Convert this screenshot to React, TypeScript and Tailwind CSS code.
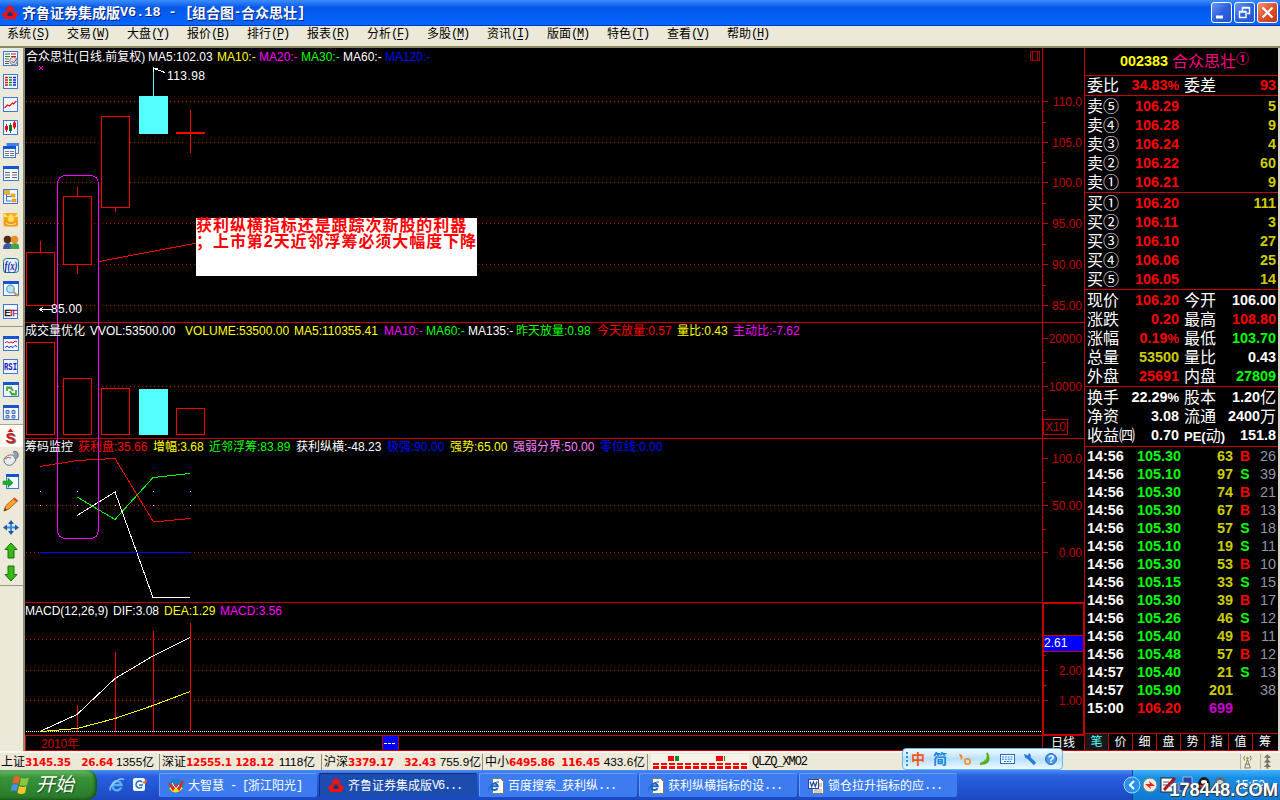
import React from 'react';

const CJK = "font-['Liberation_Sans','Noto_Sans_CJK_SC',sans-serif]";
const MONO = "font-['Liberation_Mono','Noto_Sans_CJK_SC',monospace]";

/* ---------- title bar and menu ---------- */

function AppLogo({ className = '' }: { className?: string }) {
  return (
    <svg viewBox="0 0 16 15" className={className}>
      <path d="M8 0L13 4H11.5V6H4.5V4H3Z" fill="#f81004" />
      <path d="M3 6.5H13L16 9.5V11H0V9.5Z" fill="#f81004" />
      <path d="M2 11H14V14H2Z" fill="#f81004" />
      <path d="M5.500 8.500L8 6.500l2.500 2v2.500h-5z" fill="#18357c" />
    </svg>
  );
}

function TitleBar() {
  return (
    <div className="flex h-[26px] shrink-0 items-center bg-linear-to-b from-[#3b8cff] via-[#0458ea] via-30% to-[#0566ff] border-b border-[#0038b8] pl-[2px] pr-[2px] text-white">
      <AppLogo className="mr-[4px] h-[15px] w-[16px]" />
      <div className="flex items-center text-[14px] leading-[20px] font-bold whitespace-pre [text-shadow:1px_1px_0_#0a1e78]">
        <span className={`w-[98px] ${CJK}`}>齐鲁证券集成版</span>
        <span className={`w-[65px] text-[13.5px] ${MONO}`}>V6.18 - </span>
        <span className={`w-[7px] text-[14px] ${MONO}`}>[</span>
        <span className={CJK}>组合图</span>
        <span className={`w-[7px] text-[12px] ${MONO}`}>-</span>
        <span className={CJK}>合众思壮</span>
        <span className={MONO}>]</span>
      </div>
      <div className="ml-auto flex gap-[2px]">
        {[0, 1, 2].map((i) => (
          <div
            key={i}
            className={`flex h-[21px] w-[21px] items-center justify-center rounded-[3px] border border-white ${
              i === 2
                ? 'bg-linear-to-br from-[#f09070] via-[#e0502c] to-[#c03810]'
                : 'bg-linear-to-br from-[#6c98f4] via-[#2c62e0] to-[#2454d0]'
            }`}
          >
            <svg viewBox="0 0 19 19" className="h-[19px] w-[19px]" fill="none" stroke="#fff">
              {i === 0 && <path d="M4 14h7" strokeWidth="3" />}
              {i === 1 && (
                <g>
                  <path d="M7.500 8V4.500h7v6H12M7 5h8" strokeWidth="1.400" />
                  <path d="M4.500 8.500h6.500v6h-6.500zM4 9h7.500" strokeWidth="1.400" />
                </g>
              )}
              {i === 2 && <path d="M4.500 4.500l10 10M14.500 4.500l-10 10" strokeWidth="2.200" />}
            </svg>
          </div>
        ))}
      </div>
    </div>
  );
}

const MENU: [string, string][] = [
  ['系统', 'S'], ['交易', 'W'], ['大盘', 'Y'], ['报价', 'B'], ['排行', 'P'], ['报表', 'R'], ['分析', 'F'],
  ['多股', 'M'], ['资讯', 'I'], ['版面', 'M'], ['特色', 'T'], ['查看', 'V'], ['帮助', 'H'],
];

function MenuBar() {
  return (
    <div className="flex h-[22px] shrink-0 border-b-2 border-[#8a8a5c] bg-[#ece9d8] pl-[7px] text-[12px] leading-[16px] text-black">
      {MENU.map(([t, k]) => (
        <div key={t} className="flex w-[60px]">
          <span className={CJK}>{t}</span>
          <span className={`tracking-[-1.2px] ${MONO}`}>
            (<span className="underline underline-offset-2">{k}</span>)
          </span>
        </div>
      ))}
    </div>
  );
}

/* ---------- left toolbar ---------- */

const Win = ({ children }: { children?: React.ReactNode }) => (
  <g>
    <rect x="0.5" y="0.5" width="15" height="14" fill="#f4f8ff" stroke="#3c78d8" />
    <rect x="0" y="0" width="16" height="3" fill="#1454d0" />
    {children}
  </g>
);
const Box = ({ children }: { children?: React.ReactNode }) => (
  <g>
    <rect x="0.5" y="0.5" width="14" height="14" fill="#f4f8ff" stroke="#3c78d8" />
    {children}
  </g>
);

const ICONS: React.ReactNode[] = [
  <Box>
    <path d="M2 3h5M2 5.500h5" stroke="#089030" strokeWidth="1.2" />
    <path d="M8 3h5M8 5.500h5" stroke="#e01010" strokeWidth="1.2" />
    <path d="M2 8h4M2 10.500h4M2 12.500h4" stroke="#555" />
    <circle cx="10.500" cy="10" r="3.8" fill="#ddd" stroke="#888" />
    <path d="M8.500 10l2 2 3-4" stroke="#666" fill="none" />
  </Box>,
  <Box>
    <path d="M2 3.500h3M2 6h3M2 8.500h3M2 11h3" stroke="#e01010" strokeWidth="1.4" />
    <path d="M6 3.500h3M6 6h3M6 8.500h3M6 11h3" stroke="#089030" strokeWidth="1.4" />
    <path d="M10 3.500h3M10 6h3M10 8.500h3M10 11h3" stroke="#1020d0" strokeWidth="1.4" />
  </Box>,
  <Box><path d="M1.500 11l3-3 2 1 3-3 1 1 3-3" stroke="#e01010" fill="none" strokeWidth="1.2" /></Box>,
  <Box>
    <path d="M3.500 4v8M11.500 1v8" stroke="#e01010" /><path d="M7.500 3v10" stroke="#087830" />
    <path d="M2 6h3v4H2zM10 2.500h3v5h-3z" fill="#e01010" /><path d="M6 5h3v6H6z" fill="#087830" />
  </Box>,
  <g>
    <path d="M4 0.500h11.500v10H13" fill="#f4f8ff" stroke="#3c78d8" /><path d="M3.500 0H16v3H3.500z" fill="#3c84ec" />
    <rect x="0.500" y="3.500" width="12" height="11" fill="#f4f8ff" stroke="#3c78d8" /><path d="M0 3h13v3H0z" fill="#1454d0" />
    <path d="M2 8.500h4M7 8.500h4M2 10.500h4M7 10.500h4M2 12.500h4M7 12.500h4" stroke="#777" />
  </g>,
  <Win><path d="M2 6.500h5M9 6.500h5M2 9h5M9 9h5M2 11.500h5M9 11.500h5" stroke="#666" /></Win>,
  <Box>
    <path d="M3.500 4v8h5M3.500 7.500h5" stroke="#3c78d8" fill="none" />
    <path d="M1.500 1.500h5v4h-5zM8 5h4v3H8zM9 10h4v3H9z" fill="#f0b020" stroke="#c88408" strokeWidth=".5" />
  </Box>,
  <g>
    <rect x="0.500" y="1" width="14.500" height="13.500" rx="1" fill="#f8a818" />
    <path d="M1 1l4 4 3-3 3 3 4-4v4H1z" fill="#ffe878" /><circle cx="8" cy="7" r="3" fill="#ffe060" />
    <path d="M2 9q5.500 5 12 0v3q-6 4-12 0z" fill="#f8d868" stroke="#d87808" strokeWidth=".7" />
  </g>,
  <g>
    <circle cx="4.500" cy="4.500" r="3.800" fill="#502c18" /><circle cx="11.500" cy="4.500" r="3.800" fill="#e89028" />
    <path d="M0 14q0-6 5-6t4 6z" fill="#3858a8" /><path d="M7 14q0-6 5-6t4 6z" fill="#48a048" />
  </g>,
  <g>
    <rect x="0.500" y="0.500" width="15" height="14" rx="3" fill="#e8f0ff" stroke="#087878" />
    <text x="8" y="11.500" fontSize="11.500" fontStyle="italic" fontWeight="bold" fill="#1020b0" textAnchor="middle" textLength="13" lengthAdjust="spacingAndGlyphs" fontFamily="Liberation Serif, serif">f(x)</text>
  </g>,
  <Win>
    <circle cx="7.500" cy="8" r="3.800" fill="#b8e4f8" stroke="#6898b8" strokeWidth="1.200" />
    <path d="M10.500 11l4.500 4" stroke="#c89030" strokeWidth="2" />
  </Win>,
  <Box>
    <text y="11.500" fontSize="9.500" fontFamily="Liberation Sans, sans-serif" strokeWidth=".3">
      <tspan x="1.200" fill="#000" stroke="#000">E</tspan><tspan x="5.400" fill="#d01010" stroke="#d01010">T</tspan><tspan x="9.200" fill="#803090" stroke="#803090">F</tspan>
    </text>
  </Box>,
  <Win>
    <path d="M2 7l2-1.500 2 1.500 2-1 2 1 2-2 2 1" stroke="#e01010" fill="none" />
    <path d="M2 11.500l2-1.500 2 1.500 2-1 2 1 2-2 2 1" stroke="#1020d0" fill="none" />
  </Win>,
  <Box><text x="7.500" y="11" fontSize="10" fontWeight="bold" fill="#1020c0" textAnchor="middle" textLength="13" lengthAdjust="spacingAndGlyphs" fontFamily="Liberation Mono, monospace">RSI</text></Box>,
  <Win>
    <path d="M4 9V5.500h5M4 6q5-1 6 3" stroke="#48a838" strokeWidth="1.800" fill="none" />
    <path d="M13 8v4.500H8M13 12q-5 1-6-3" stroke="#48a838" strokeWidth="1.800" fill="none" />
  </Win>,
  <Win><path d="M3 5.500h3v3H3zM9 5.500h3v3H9zM3 10.500h3v2.500H3zM9 10.500h3v2.500H9z" fill="#b8c8e8" stroke="#4870b8" /></Win>,
  <g>
    <text x="8.500" y="14.500" fontSize="15" fontWeight="bold" fill="#707070" textAnchor="middle" fontFamily="Liberation Sans, sans-serif">S</text>
    <text x="7.500" y="14" fontSize="15" fontWeight="bold" fill="#d81414" textAnchor="middle" fontFamily="Liberation Sans, sans-serif">S</text>
    <path d="M7.500 -0.500l3 3.500h-6z" fill="#d81414" />
  </g>,
  <g>
    <path d="M1 8q3-5 9-4l3 5q-4 7-9 5-4-2-3-6z" fill="#e8ecf0" stroke="#707880" />
    <path d="M10 1q4-2 5 2t-3 5" fill="#90a0b0" stroke="#607080" /><path d="M2 8q3-3 6-1" stroke="#e05030" fill="none" />
  </g>,
  <g>
    <rect x="3.500" y="0.500" width="12" height="14" fill="#f4f8ff" stroke="#3c78d8" /><path d="M3 0h13v3H3z" fill="#1454d0" />
    <path d="M0 7h5V4l5 4.800-5 4.700v-3H0z" fill="#18b028" stroke="#087818" strokeWidth=".5" />
  </g>,
  <g>
    <path d="M1 14l1.500-5L11 1l3.500 3L6 12z" fill="#f8a030" stroke="#a05818" strokeWidth=".8" />
    <path d="M10 2l1.500-1.500 3.500 3L13.500 5z" fill="#e04830" /><path d="M1 14l1-3 2 2z" fill="#333" />
  </g>,
  <g>
    <path d="M8 0l3 4H5zM8 15l3-4H5zM0 7.500l4-3v6zM16 7.500l-4-3v6z" fill="#1858b8" />
    <path d="M7 4h2v2.500h3v2H9V11H7V8.500H4v-2h3z" fill="#3888e0" />
  </g>,
  <path d="M8 0l6 6.500h-3V15H5V6.500H2z" fill="#38b818" stroke="#187008" />,
  <path d="M8 15l6-6.500h-3V0H5v8.500H2z" fill="#38b818" stroke="#187008" />,
];

function Toolbar() {
  const cell = (n: React.ReactNode, i: number) => (
    <div key={i} className={`flex h-[23px] shrink-0 items-center pl-[3px] ${i === 16 ? 'bg-[#fbfaf4] border-t border-[#aaa890]' : ''}`}>
      <svg viewBox="0 0 16 15" className="h-[15px] w-[16px] overflow-visible">{n}</svg>
    </div>
  );
  return (
    <div className="flex w-[25px] shrink-0 flex-col border-r-2 border-[#8f8d74] bg-[#ece9d8]">
      <div className="-mt-px flex h-[280px] flex-col border-b border-[#9a9888]">{ICONS.slice(0, 12).map((n, i) => cell(n, i))}</div>
      <div className="flex h-[259px] flex-col border-b border-[#9a9888] pt-[5px]">{ICONS.slice(12).map((n, i) => cell(n, i + 12))}</div>
    </div>
  );
}

/* ---------- charts ---------- */

type Seg = [string, string];
const HEADS: Seg[][] = [
  [
    ['合众思壮(日线.前复权)', 'w-[122px] text-white'],
    ['MA5:102.03', 'w-[69px] text-white'],
    ['MA10:-', 'w-[42px] text-[#ffff00]'],
    ['MA20:-', 'w-[42px] text-[#ff00ff]'],
    ['MA30:-', 'w-[42px] text-[#00ff00]'],
    ['MA60:-', 'w-[42px] text-white'],
    ['MA120:-', 'w-[60px] text-[#0000ff]'],
  ],
  [
    ['成交量优化', 'w-[65px] text-white'],
    ['VVOL:53500.00', 'w-[95px] text-white'],
    ['VOLUME:53500.00', 'w-[109px] text-[#ffff00]'],
    ['MA5:110355.41', 'w-[90px] text-[#ffff00]'],
    ['MA10:-', 'w-[42px] text-[#ff00ff]'],
    ['MA60:-', 'w-[42px] text-[#00ff00]'],
    ['MA135:-', 'w-[48px] text-white'],
    ['昨天放量:0.98', 'w-[81px] text-[#00ff00]'],
    ['今天放量:0.57', 'w-[80px] text-[#ff0000]'],
    ['量比:0.43', 'w-[56px] text-[#ffff00]'],
    ['主动比:-7.62', 'w-[80px] text-[#ff00ff]'],
  ],
  [
    ['筹码监控', 'w-[53px] text-white'],
    ['获利盘:35.66', 'w-[75px] text-[#ff0000]'],
    ['增幅:3.68', 'w-[56px] text-[#ffff00]'],
    ['近邻浮筹:83.89', 'w-[87px] text-[#00ff00]'],
    ['获利纵横:-48.23', 'w-[91px] text-white'],
    ['极强:90.00', 'w-[63px] text-[#0000ff]'],
    ['强势:65.00', 'w-[63px] text-[#ffff00]'],
    ['强弱分界:50.00', 'w-[87px] text-[#ff80ff]'],
    ['零位线:0.00', 'w-[70px] text-[#0000ff]'],
  ],
  [
    ['MACD(12,26,9)', 'w-[88px] text-white'],
    ['DIF:3.08', 'w-[51px] text-white'],
    ['DEA:1.29', 'w-[56px] text-[#ffff00]'],
    ['MACD:3.56', 'w-[70px] text-[#ff00ff]'],
  ],
];

const AXIS: [number, string][] = [
  [101.5, '110.0'], [142.5, '105.0'], [182.5, '100.0'], [223.5, '95.00'], [264.5, '90.00'], [305.5, '85.00'],
  [338.5, '20000'], [386.5, '10000'], [458.5, '100.0'], [505.5, '50.00'], [552.5, '0.00'], [670.5, '2.00'], [700.5, '1.00'],
];
const GRID = [101.5, 142.5, 182.5, 223.5, 264.5, 305.5, 386.5, 505.5, 552.5, 639.5, 670.5, 700.5];
const MINOR = [122.5, 162.5, 203.5, 244.5, 285.5, 362.5, 410.5, 482.5, 529.5, 655.5, 685.5];
const MICRO = [111.5, 132.5, 152.5, 172.5, 193.5, 213.5, 234.5, 254.5, 275.5, 295.5, 350.5, 374.5, 398.5, 470.5, 494.5, 517.5, 541.5];
const DAYS = [40, 77, 115, 153, 190];

function ChartDrawing() {
  return (
    <svg viewBox="25 48 1060 703" className="absolute inset-0 h-[703px] w-[1060px]" fill="none" shapeRendering="crispEdges">
      {GRID.map((y) => <path key={y} d={`M26 ${y}H1042`} stroke="#b80000" strokeDasharray="1 3" />)}
      <path d="M26 731.500H1042" stroke="#fff" strokeDasharray="1 1" />

      <g stroke="#c80000">
        <path d="M25 322.500H1085M25 438.500H1085M25 602.500H1085M25 735.500H1085M25 750.500H1085M1042.500 48V751M1084.500 48V751M25.500 735V751" />
        <path d="M1043 603.500H1083.500V734.500H1043.500V603" />
        {AXIS.map(([y]) => <path key={y} d={`M1042 ${y}h6`} />)}
        {MINOR.map((y) => <path key={y} d={`M1042 ${y}h4`} />)}
        {MICRO.map((y) => <path key={y} d={`M1042 ${y}h2`} />)}
        <path d="M1043.500 419.500h24v15h-24z" />
        <path d="M1030.500 51.500h9v9h-9zM1032.500 52v8M1037.500 52v8" stroke="#a00000" />
      </g>
      <rect x="1044" y="636" width="39" height="15" fill="#0000ff" />
      <path d="M1044 635.500h39M1044 651.500h39" stroke="#c80000" />
      <rect x="382.500" y="735.500" width="16" height="15" fill="#0000ff" stroke="#c80000" />
      <path d="M384 743.500h3m1 0h3m1 0h3" stroke="#fff" />

      <g stroke="#ff0000" fill="#000">
        <path d="M40.500 241V252M77.500 187V196M77.500 265V274M115.500 208V212" />
        <rect x="26.500" y="252.500" width="28" height="53" />
        <rect x="63.500" y="196.500" width="28" height="68" />
        <rect x="101.500" y="116.500" width="28" height="91" />
        <path d="M190.500 110V153" />
        <path d="M176 133H205" strokeWidth="2" />
        <rect x="26.500" y="342.500" width="28" height="92" />
        <rect x="63.500" y="378.500" width="28" height="56" />
        <rect x="101.500" y="388.500" width="28" height="46" />
        <rect x="176.500" y="408.500" width="28" height="26" />
      </g>
      <path d="M153.500 67V96" stroke="#54ffff" />
      <rect x="139" y="96" width="29" height="38" fill="#54ffff" />
      <rect x="139" y="389" width="29" height="46" fill="#54ffff" />
      <path d="M153.500 72V68.500L165 72.500M154 68.500h4" stroke="#fff" />
      <path d="M40 309.500H52M43 307l-3 2.500 3 2.500" stroke="#fff" />
      <path d="M39 66l4 4M43 66l-4 4" stroke="#ff00ff" />

      <path d="M40 466.500L77 460.500 115 458.500 153.500 522 190 518.500" stroke="#ff0000" />
      <path d="M77 497L115 519.500 153 477.500 190 473.500" stroke="#00ff00" />
      <path d="M77 515.500L115 492 153 597.500H190" stroke="#fff" />
      <path d="M40 552.500H190" stroke="#0000ff" />
      {DAYS.map((x) => (
        <g key={x}>
          <rect x={x} y="467" width="1" height="1" fill="#0000ff" />
          <rect x={x} y="491" width="1" height="1" fill="#ffff00" />
          <rect x={x} y="505" width="1" height="1" fill="#ffb0ff" />
        </g>
      ))}

      <path d="M77.500 705V732M115.500 652V732M153.500 631V732M190.500 623V732" stroke="#ff0000" />
      <path d="M41 731L77 714.500 115 678.500 153 656 190 637.500" stroke="#fff" />
      <path d="M41 731.500L77 728.500 115 718.500 153 705.500 190 691.500" stroke="#ffff00" />

      <path d="M99 261.500L197 243" stroke="#ff0000" />
      <path d="M57.500 184Q58 175.500 66 175.500H90Q98 175.500 98.500 184V530Q98 538.500 90 538.500H66Q58 538.500 57.500 530Z" stroke="#ff00ff" />

      <g fontFamily="'Liberation Sans', 'Noto Sans CJK SC', sans-serif" fontSize="12" stroke="none">
        {AXIS.map(([y, t]) => <text key={y} x="1082" y={y + 4.5} fill="#c00000" textAnchor="end">{t}</text>)}
        <text x="1045" y="431" fill="#c00000" textLength="21">X10</text>
        <text x="1044" y="647" fill="#fff">2.61</text>
        <text x="167" y="80" fill="#fff" textLength="38">113.98</text>
        <text x="51" y="313" fill="#fff" textLength="31">85.00</text>
        <text x="41" y="748" fill="#c80000" textLength="38">2010年</text>
        <text x="1051" y="747" fill="#fff">日线</text>
      </g>
    </svg>
  );
}

function Charts() {
  const heights = ['h-[275px]', 'h-[116px]', 'h-[164px]', 'h-[148px]'];
  return (
    <div className="relative w-[1060px] shrink-0 bg-black">
      <ChartDrawing />
      {HEADS.map((segs, i) => (
        <div key={i} className={`relative ${heights[i]}`}>
          <div className={`flex text-[12px] leading-[16px] whitespace-nowrap ${i === 0 ? 'pt-[1px] pl-[1px]' : ''} ${CJK}`}>
            {segs.map(([t, c]) => <span key={t} className={`shrink-0 ${c}`}>{t}</span>)}
          </div>
        </div>
      ))}
      <div className={`absolute top-[170px] left-[171px] h-[58px] w-[281px] bg-white text-[16px] leading-[16px] font-bold tracking-[0.95px] whitespace-nowrap text-[#ff0000] ${CJK}`}>
        <div className="h-[16px]">获利纵横指标还是跟踪次新股的利器</div>
        <div className="h-[16px]">；上市第2天近邻浮筹必须大幅度下降</div>
      </div>
    </div>
  );
}

/* ---------- quote panel ---------- */

const R = 'text-[#ff0000]';
const G = 'text-[#00ff00]';
const Y = 'text-[#cccc00]';
const W = 'text-white';

const SELL: [string, string, string][] = [
  ['卖⑤', '106.29', '5'], ['卖④', '106.28', '9'], ['卖③', '106.24', '4'], ['卖②', '106.22', '60'], ['卖①', '106.21', '9'],
];
const BUY: [string, string, string][] = [
  ['买①', '106.20', '111'], ['买②', '106.11', '3'], ['买③', '106.10', '27'], ['买④', '106.06', '25'], ['买⑤', '106.05', '14'],
];
type Info = [string, string, string, string, string, string];
const INFO: Info[] = [
  ['现价', '106.20', R, '今开', '106.00', W],
  ['涨跌', '0.20', R, '最高', '108.80', R],
  ['涨幅', '0.19%', R, '最低', '103.70', G],
  ['总量', '53500', Y, '量比', '0.43', W],
  ['外盘', '25691', R, '内盘', '27809', G],
];
const INFO2: Info[] = [
  ['换手', '22.29%', W, '股本', '1.20亿', W],
  ['净资', '3.08', W, '流通', '2400万', W],
  ['收益㈣', '0.70', W, 'PE(动)', '151.8', W],
];
const TICKS: [string, string, string, string, string][] = [
  ['14:56', '105.30', '63', 'B', '26'], ['14:56', '105.10', '97', 'S', '39'], ['14:56', '105.30', '74', 'B', '21'],
  ['14:56', '105.30', '67', 'B', '13'], ['14:56', '105.30', '57', 'S', '18'], ['14:56', '105.10', '19', 'S', '11'],
  ['14:56', '105.30', '53', 'B', '10'], ['14:56', '105.15', '33', 'S', '15'], ['14:56', '105.30', '39', 'B', '17'],
  ['14:56', '105.26', '46', 'S', '12'], ['14:56', '105.40', '49', 'B', '11'], ['14:56', '105.48', '57', 'B', '12'],
  ['14:57', '105.40', '21', 'S', '13'], ['14:57', '105.90', '201', '', '38'], ['15:00', '106.20', '699', '', ''],
];

function Num({ t, c }: { t: string; c: string }) {
  const m = t.match(/^([\d.%]*)(.*)$/)!;
  return (
    <span className={`flex items-center text-[14.4px] font-bold ${c}`}>
      {m[1].replace('%', '')}
      {m[1].endsWith('%') && <span className="text-[13px]">%</span>}
      {m[2] && <span className="text-[16px] font-normal">{m[2]}</span>}
    </span>
  );
}

function InfoRow({ r }: { r: Info }) {
  return (
    <div className="flex h-[19px] items-center pl-[2px]">
      <span className="w-[50px]">{r[0]}</span>
      <span className="w-[42px] shrink-0 flex justify-end"><Num t={r[1]} c={r[2]} /></span>
      <span className="ml-[5px]">{r[3] === 'PE(动)' ? <span className="text-[13px] font-bold">PE(<span className="text-[15px] font-normal">动</span>)</span> : r[3]}</span>
      <span className="ml-auto flex pr-[2px]"><Num t={r[4]} c={r[5]} /></span>
    </div>
  );
}

function OrderRow({ r }: { r: [string, string, string] }) {
  return (
    <div className="flex h-[19px] items-center pl-[2px]">
      <span className="w-[48px]">{r[0]}</span>
      <Num t={r[1]} c={R} />
      <span className="ml-auto flex pr-[2px]"><Num t={r[2]} c={Y} /></span>
    </div>
  );
}

function QuotePanel() {
  return (
    <div className={`flex w-[195px] shrink-0 flex-col border-r-2 border-[#d8d6c8] bg-black text-[16px] leading-[19px] whitespace-nowrap text-white ${CJK}`}>
      <div className="flex h-[28px] items-center border-b border-[#c80000] pl-[35px]">
        <span className="w-[52px] text-[14.4px] font-bold text-[#ffff00]">002383</span>
        <span className="text-[#ff0080]">合众思壮</span>
        <span className="relative -top-[3px] text-[13px] font-bold text-[#ff0080]">①</span>
      </div>
      <div className="h-[20px] border-b border-[#c80000]"><InfoRow r={['委比', '34.83%', R, '委差', '93', R]} /></div>
      <div className="h-[97px] border-b border-[#c80000] pt-[1px]">{SELL.map((r) => <OrderRow key={r[0]} r={r} />)}</div>
      <div className="h-[97px] border-b border-[#c80000] pt-[1px]">{BUY.map((r) => <OrderRow key={r[0]} r={r} />)}</div>
      <div className="h-[97px] border-b border-[#c80000] pt-[1px]">{INFO.map((r) => <InfoRow key={r[0]} r={r} />)}</div>
      <div className="h-[60px] border-b border-[#c80000] pt-[1px]">{INFO2.map((r) => <InfoRow key={r[0]} r={r} />)}</div>
      <div className="grow">
        {TICKS.map((t, i) => (
          <div key={i} className="flex h-[18px] items-center pl-[2px] text-[14.4px] font-bold">
            <span className="w-[40px]">{t[0]}</span>
            <span className={`w-[54px] text-right ${i === 14 ? R : G}`}>{t[1]}</span>
            <span className={`w-[52px] text-right ${i === 14 ? 'text-[#cc00cc]' : Y}`}>{t[2]}</span>
            <span className={`w-[24px] text-center text-[14px] ${t[3] === 'B' ? R : G}`}>{t[3]}</span>
            <span className="w-[19px] text-right font-normal text-[#9494a4]">{t[4]}</span>
          </div>
        ))}
      </div>
      <div className="flex h-[18px] border-y border-[#c80000] text-[12px] leading-[16px]">
        {['笔', '价', '细', '盘', '势', '指', '值', '筹'].map((t, i) => (
          <span key={t} className={`w-[24px] text-center ${i < 7 ? 'border-r border-[#c80000]' : ''} ${i === 0 ? 'bg-[#181818] text-[#54ffff]' : ''}`}>{t}</span>
        ))}
      </div>
    </div>
  );
}

/* ---------- status bar ---------- */

const INDEXES: [string, string, string, string][] = [
  ['上证', '3145.35', '26.64', '1355亿'], ['深证', '12555.1', '128.12', '1118亿'],
  ['沪深', '3379.17', '32.43', '755.9亿'], ['中小', '6495.86', '116.45', '433.6亿'],
];

function StatusBar() {
  const widths = ['w-[159px]', 'w-[162px]', 'w-[161px]', 'w-[165px]'];
  const turnover = ['w-[41px]', 'w-[41px]', 'w-[45px]', 'w-[45px]'];
  return (
    <div className="relative flex h-[19px] shrink-0 items-center border-t-2 border-[#f8f8f0] bg-[#ece9d8] pl-[1px] text-[12px] leading-[16px] text-black">
      {INDEXES.map((x, i) => (
        <div key={x[0]} className={`flex items-center border-r border-[#8f8d80] whitespace-nowrap ${i ? 'pl-[2px]' : ''} ${widths[i]} ${CJK}`}>
          <span className="w-[24px] shrink-0">{x[0]}</span>
          <span className={`flex shrink-0 justify-between font-['DejaVu_Sans'] text-[10.5px] font-bold tracking-[-0.3px] text-[#ff0000] ${i === 3 ? 'w-[91px]' : 'w-[88px]'}`}>
            <span>{x[1]}</span><span>{x[2]}</span>
          </span>
          <span className={`shrink-0 text-right text-[11.8px] ${turnover[i]}`}>{x[3]}</span>
        </div>
      ))}
      <svg viewBox="0 0 98 16" className="ml-[3px] h-[16px] w-[98px]" shapeRendering="crispEdges">
        <rect width="98" height="16" fill="#f6f4ea" />
        <path d="M17 2h6v5h-6zM65 2h7v5h-7z" fill="#ff0000" /><path d="M24 2h4v5h-4zM73 2h1v5h-1z" fill="#089020" />
        <path d="M2 10H97" stroke="#ff0000" strokeWidth="2" strokeDasharray="6 2" />
        <path d="M2 13.500H97" stroke="#ff0000" strokeWidth="3" strokeDasharray="6 2" />
      </svg>
      <span className={`ml-[3px] tracking-[-1.1px] ${MONO}`}>QLZQ_XMO2</span>
      <div className="ml-auto flex h-full items-center gap-[6px] pr-[8px]">
        <svg viewBox="0 0 14 16" className="h-[15px] w-[14px] border-l border-[#b8b4a0]" fill="none" stroke="#77756a">
          <path d="M7 6l-3 9h6zM5 11h4M4 2q-2 2 0 5M10 2q2 2 0 5" /><circle cx="7" cy="4.500" r="1" fill="#a0a000" stroke="#a0a000" />
        </svg>
        <svg viewBox="0 0 12 16" className="h-[15px] w-[12px] border-l border-[#b8b4a0]" fill="#77756a">
          <path d="M7 0l4 4H3zM7 5l4 4H3zM7 10l4 4H3zM6 4h2v12H6z" />
        </svg>
      </div>
      <LanguageBar />
    </div>
  );
}

function LanguageBar() {
  return (
    <div className={`absolute -top-[5px] left-[902px] flex h-[22px] w-[161px] items-center rounded-[4px] border border-[#60b8f0] bg-linear-to-b from-[#f4fbff] via-[#b8e0fc] to-[#eef8ff] ${CJK}`}>
      <span className="ml-[3px] h-[14px] border-l-2 border-dotted border-[#3890d0]" />
      <span className="ml-[3px] w-[22px] text-[14px] font-bold text-[#f05818]">中</span>
      <span className="w-[20px] text-[14px] font-bold text-[#1884e0]">简</span>
      <svg viewBox="0 0 104 18" className="h-[18px] w-[104px] shrink-0">
        <path d="M6 4a2.800 2.800 0 1 1 1 6q2-2 0-3" fill="#f88820" /><circle cx="14.500" cy="11.500" r="2.700" fill="none" stroke="#f88820" strokeWidth="1.500" />
        <path d="M34 3q5 11-7 11 10-3 7-11z" fill="#58b018" stroke="#58b018" strokeWidth="2" />
        <rect x="47.500" y="4.500" width="14" height="9" fill="#fff" stroke="#1870d0" />
        <path d="M49 7h11M49 9.200h11M51 11.500h7" stroke="#1870d0" strokeDasharray="2 .8" />
        <path d="M75 7l7 7" stroke="#2878d8" strokeWidth="3.200" /><path d="M71 4q1 6 5 4t0-5l-1 2.500z" fill="#2878d8" />
        <circle cx="98" cy="9" r="5.500" fill="#4898f0" /><circle cx="98" cy="9" r="5.500" fill="none" stroke="#2468c0" />
        <text x="98" y="13" fontSize="11" fontWeight="bold" fill="#fff" textAnchor="middle" fontFamily="Liberation Sans, sans-serif">?</text>
      </svg>
    </div>
  );
}

/* ---------- task bar ---------- */

function IeGlyph() {
  return (
    <g>
      <path d="M12.200 10.500A4.600 4.600 0 1 1 12.500 8H4.500" fill="none" stroke="#58b0f8" strokeWidth="2.400" />
      <path d="M1.500 13.500q-2-3 4-8t9.500-3" fill="none" stroke="#a8d8fc" strokeWidth="1.200" />
    </g>
  );
}
function PageIe() {
  return (
    <svg viewBox="0 0 16 16" className="h-[16px] w-[16px]">
      <path d="M4.500 0.500h8l3 3v12h-11z" fill="#fffef4" stroke="#777" />
      <path d="M9.500 10.200A3.300 3.300 0 1 1 9.800 8.200H3.500" fill="none" stroke="#1868c8" strokeWidth="2" />
      <path d="M.5 12.500q-1-2.500 3.500-6t7-2.500" fill="none" stroke="#1868c8" />
    </svg>
  );
}
function DzhIcon() {
  return (
    <svg viewBox="0 0 16 16" className="h-[16px] w-[16px]">
      <circle cx="8" cy="8" r="7.500" fill="#2080d0" />
      <path d="M1 10q6 9 14 0l-2-1q-4 4-10 0z" fill="#f8d820" />
      <path d="M1 5l4 6 3-4 3 4 4-8" stroke="#e82810" strokeWidth="2.200" fill="none" /><path d="M4 5l4 6 3-4" stroke="#fff" fill="none" />
    </svg>
  );
}
function WordIcon() {
  return (
    <svg viewBox="0 0 16 16" className="h-[16px] w-[16px]">
      <path d="M4.500 0.500h8l3 3v12h-11z" fill="#fffef4" stroke="#777" /><path d="M11 6h3M11 8h3M6 12h8M6 14h8" stroke="#999" />
      <rect x="0.500" y="1.500" width="10" height="9" fill="#fff" stroke="#2848a8" />
      <path d="M2 3.500l1.700 5L5.500 4l1.800 4.500L9 3.500" stroke="#2848a8" strokeWidth="1.300" fill="none" />
    </svg>
  );
}

const TASKS: { icon: React.ReactNode; parts: [string, string][]; active?: boolean }[] = [
  { icon: <DzhIcon />, parts: [['c', '大智慧'], ['m', ' - ['], ['c', '浙江阳光'], ['m', ']']] },
  { icon: <AppLogo className="h-[15px] w-[16px]" />, parts: [['c', '齐鲁证券集成版'], ['m', 'V6...']], active: true },
  { icon: <PageIe />, parts: [['c', '百度搜索'], ['m', '_'], ['c', '获利纵'], ['m', '...']] },
  { icon: <PageIe />, parts: [['c', '获利纵横指标的设'], ['m', '...']] },
  { icon: <WordIcon />, parts: [['c', '锁仓拉升指标的应'], ['m', '...']] },
];

function TaskBar() {
  return (
    <div className="relative flex h-[30px] shrink-0 items-stretch bg-linear-to-b from-[#4c8cf4] via-[#2860e0] via-20% to-[#1c48c0] text-white">
      <div className="flex w-[97px] items-center rounded-r-[10px] bg-linear-to-b from-[#68b868] via-[#389438] via-25% to-[#287828] pl-[10px] shadow-[inset_-2px_-1px_3px_#185018]">
        <svg viewBox="0 0 20 18" className="h-[18px] w-[20px]">
          <path d="M4 1q3-2 6 0L8.300 8q-3-2-6 0z" fill="#f06030" /><path d="M11 1.500q3 2 8 0L17 9q-4 1.500-7.500 0z" fill="#88c840" />
          <path d="M2 9.200q3-2 6 0l-1.500 6.300q-3-2-6 0z" fill="#4890f0" /><path d="M9 10q4 2 7.500 0l-1.500 7q-4 2-7.500 0z" fill="#f8c828" />
        </svg>
        <span className={`ml-[6px] text-[19px] leading-[22px] italic [text-shadow:1px_1px_1px_#1c4c1c] ${CJK}`}>开始</span>
      </div>
      <div className="flex w-[62px] items-center gap-[7px] pl-[12px]">
        <svg viewBox="0 0 16 16" className="h-[16px] w-[16px]"><IeGlyph /></svg>
        <svg viewBox="0 0 16 16" className="h-[16px] w-[16px]">
          <rect x="1" y="1" width="12" height="13" rx="2" fill="#f4faff" /><path d="M10 5a3.500 3.500 0 1 0 0 5M7 8h4" stroke="#2070c0" strokeWidth="1.600" fill="none" />
          <path d="M10 6l5-4-1 5z" fill="#e07020" />
        </svg>
      </div>
      <div className="flex gap-[2px] py-[3px]">
        {TASKS.map((t, i) => (
          <div key={i} className={`flex h-[24px] w-[158px] items-center rounded-[2px] border-t border-l pl-[8px] ${t.active ? 'border-[#103084] bg-[#1c4cae]' : 'border-[#68a0ff] bg-[#3c7cf0]'}`}>
            {t.icon}
            <span className="flex pl-[4px] text-[12px] leading-[16px] whitespace-pre">
              {t.parts.map(([k, s], j) => (
                <span key={j} className={k === 'c' ? CJK : `tracking-[-1.2px] ${MONO}`}>{s}</span>
              ))}
            </span>
          </div>
        ))}
      </div>
      <div className="ml-auto flex w-[148px] items-center border-l border-[#0c4890] bg-linear-to-b from-[#40b0f8] via-[#1890e8] via-25% to-[#1078d0]">
        <svg viewBox="0 0 104 22" className="-ml-[10px] h-[22px] w-[104px] shrink-0">
          <circle cx="9" cy="11" r="8" fill="#2890f0" stroke="#a0d8ff" /><path d="M11 7l-4 4 4 4" stroke="#fff" strokeWidth="2" fill="none" />
          <circle cx="27" cy="11" r="7" fill="#e8ece8" stroke="#688868" /><path d="M22 10h5l-1-3 6 5h-5l1 3z" fill="#f02010" />
          <rect x="38" y="4" width="12" height="14" fill="#fff" stroke="#222" /><path d="M40 8h6M40 11h4" stroke="#555" /><path d="M52 4l-11 12" stroke="#b01020" strokeWidth="3" />
          <path d="M60 3h9v8h-9zM56 9h9v8h-9z" fill="#2848a0" stroke="#a8b8d8" />
          <ellipse cx="81" cy="11" rx="6" ry="8" fill="#181818" /><ellipse cx="81" cy="8" rx="3" ry="2" fill="#fff" /><path d="M76 11h10v2.500H76z" fill="#e02818" /><path d="M79 9h4l-2 2z" fill="#f8a020" />
          <ellipse cx="97" cy="11" rx="6" ry="8" fill="#606870" /><ellipse cx="97" cy="8" rx="3" ry="2" fill="#c8d0d8" />
        </svg>
        <span className={`ml-[8px] text-[12px] ${CJK}`}>15:52</span>
      </div>
      <div className={`absolute right-[2px] bottom-0 text-[18.3px] leading-[20px] font-bold whitespace-nowrap text-white [text-shadow:1px_1px_0_#333,-1px_0_0_#345] ${CJK}`}>178448.COM</div>
    </div>
  );
}

export default function App() {
  return (
    <div className="flex h-[800px] w-[1280px] flex-col overflow-hidden bg-[#ece9d8]">
      <TitleBar />
      <MenuBar />
      <div className="flex h-[703px] shrink-0">
        <Toolbar />
        <Charts />
        <QuotePanel />
      </div>
      <StatusBar />
      <TaskBar />
    </div>
  );
}
